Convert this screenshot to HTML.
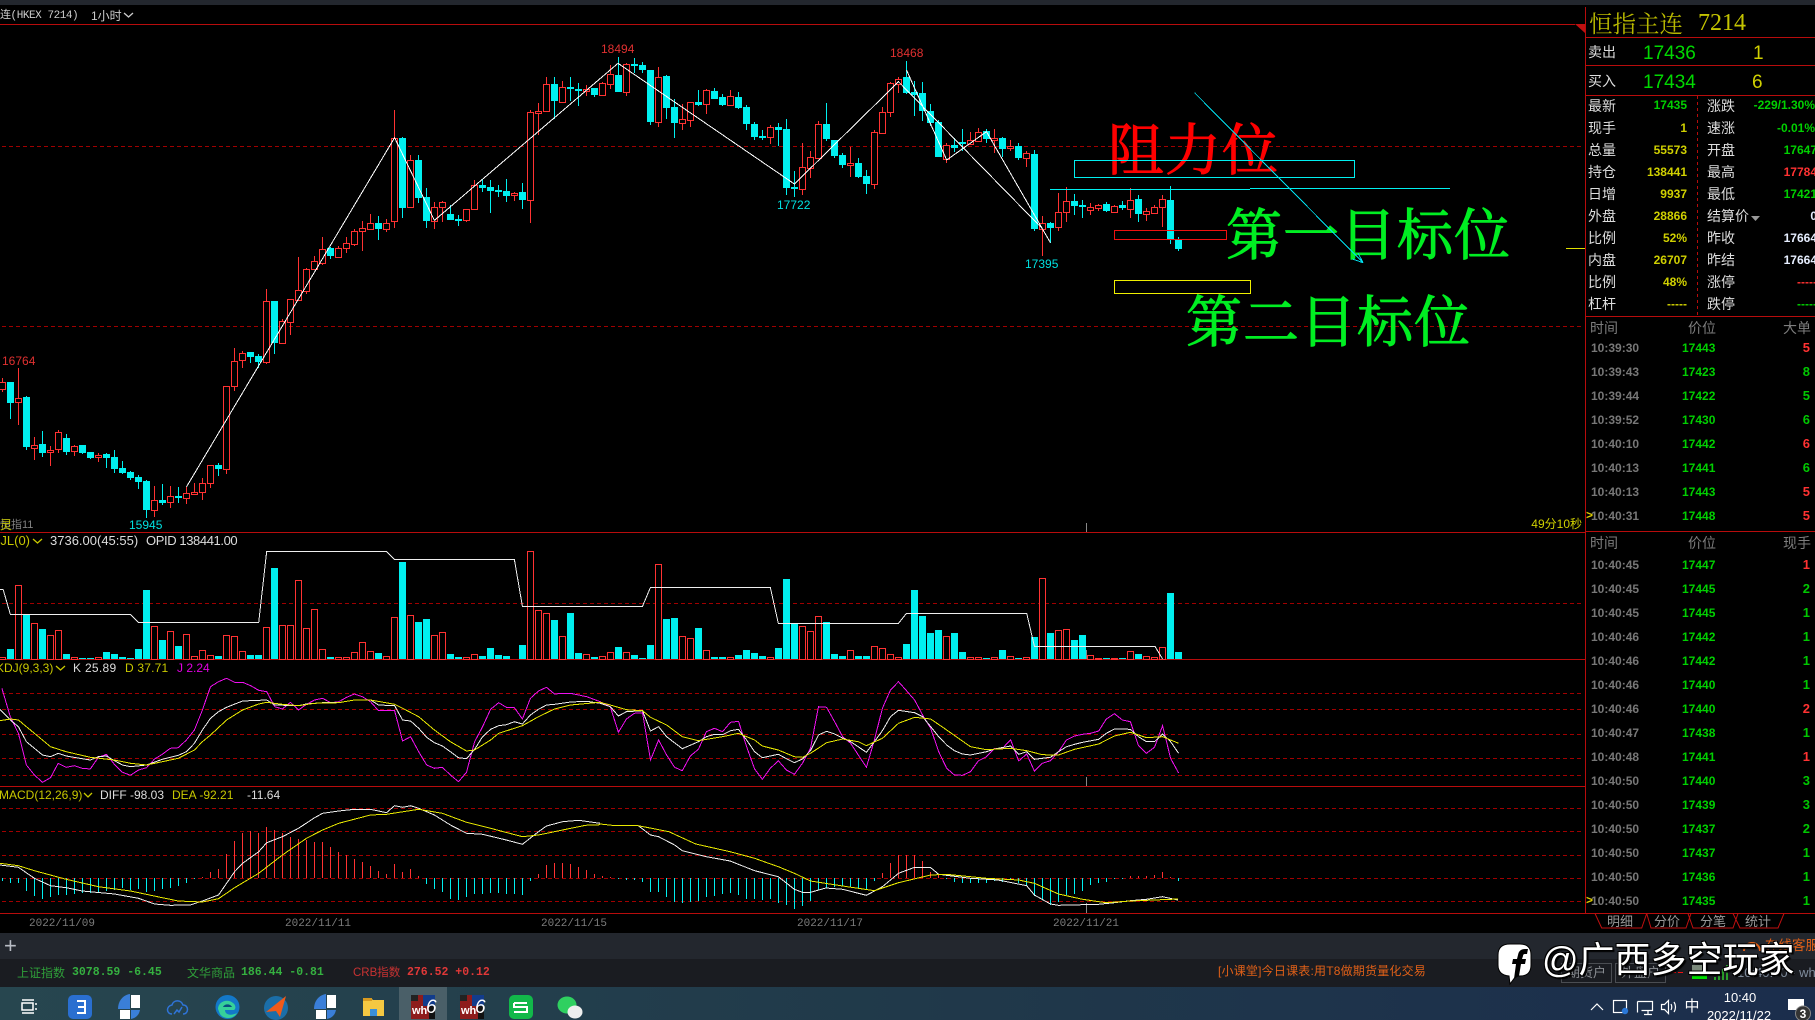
<!DOCTYPE html>
<html lang="zh"><head><meta charset="utf-8"><title>恒指主连</title>
<style>
html,body{margin:0;padding:0;background:#000;width:1815px;height:1020px;overflow:hidden}
body{position:relative;font-family:"Liberation Sans","WenQuanYi Zen Hei","Noto Sans CJK SC",sans-serif}
.t{position:absolute;white-space:nowrap;line-height:16px;height:16px;font-size:12px}
.l{font-size:14px;color:#ddd}
.v{font-weight:700;font-size:12px;right:128px}
.w{font-weight:700;font-size:12px;right:-2px}
.g{color:#00d000}.y{color:#d0d000}.r2{color:#ff3232}.e{color:#e6eeff}
.h{color:#7d7d7d;font-size:14px}
.row{position:absolute;left:0;width:1815px;height:16px;line-height:16px;font-size:12px;font-weight:700}
.row b{position:absolute;left:1591px;color:#777}
.row i{position:absolute;left:1682px;color:#00d000;font-style:normal}
.row u{position:absolute;right:5px;text-decoration:none;font-size:13px}
.R{color:#ff3232}.G{color:#00c800}
.m{font-family:"Liberation Mono","WenQuanYi Zen Hei",monospace;font-size:11.5px}
.d{font-family:"Liberation Mono",monospace;font-size:11px;color:#7c7c7c}
.tab{color:#999;font-size:13px;transform:translateX(-50%)}
svg{position:absolute;left:0;top:0}
</style></head><body>
<div style="position:absolute;left:0;top:0;width:1815px;height:5px;background:#23272e"></div>
<div style="position:absolute;left:0;top:933px;width:1815px;height:26px;background:#23272e"></div>
<div style="position:absolute;left:0;top:959px;width:1815px;height:28px;background:#1a1c21"></div>
<div style="position:absolute;left:0;top:987px;width:1815px;height:33px;background:linear-gradient(90deg,#27464f,#20394a 50%,#1b2d4c)"></div>
<div style="position:absolute;left:399px;top:987px;width:48px;height:33px;background:#4a5f68"></div>

<svg width="1815" height="1020" viewBox="0 0 1815 1020">
<g id="ch" shape-rendering="crispEdges"></g>
<g font-family="'Noto Serif CJK SC',serif" font-weight="400" font-size="56" letter-spacing="1" stroke-width="1">
<text x="1108" y="170" fill="#ff0000" stroke="#ff0000">阻力位</text>
<text x="1226" y="255" fill="#00ee22" stroke="#00ee22">第一目标位</text>
<text x="1186" y="342" fill="#00ee22" stroke="#00ee22">第二目标位</text>
</g>
<g fill="none" shape-rendering="crispEdges">
<rect x="1074.5" y="160.5" width="280" height="17" stroke="#00f0f0"/>
<path d="M1050 189.5H1250M1250 188.5H1450" stroke="#00f0f0"/>
<rect x="1114.5" y="230.5" width="112" height="9" stroke="#f01010"/>
<rect x="1114.5" y="280.5" width="136" height="13" stroke="#f0f000"/>
<path d="M1194.5 92.7L1363 262.7M1363 262.7L1352.5 259M1363 262.7L1358 253" stroke="#00e0f0"/>
<path d="M1566 248.5H1585" stroke="#e0e000"/>
</g>
<path d="M1575 24H1585V33Z" fill="#c01010"/>
<path d="M1751 216h9l-4.5 5z" fill="#999"/>
<g fill="none" stroke="#c01010">
<path d="M1595 913.5L1601.7 928H1641.7L1646.7 913.5M1646.7 913.5L1651 928H1686L1691 913.5M1688 913.5L1693 928H1733L1738 913.5M1733 913.5L1740 928H1778L1784 913.5"/>
</g>
<!-- status widgets -->
<path d="M1744 951a8 8 0 0 1 16 0" fill="none" stroke="#e06018" stroke-width="2"/>
<rect x="1561.5" y="963.5" width="50" height="19" fill="none" stroke="#4a4d52"/>
<rect x="1615.5" y="963.5" width="50" height="19" fill="none" stroke="#4a4d52"/>
<path d="M1671 972.5h5M1678 972.5h5" stroke="#f01010"/>
<rect x="1692" y="965" width="15" height="9" fill="#7c8a7c"/><rect x="1692" y="974" width="15" height="5" fill="#00e000"/>
<path d="M1714 980v-3h2v3zM1718 980v-7h2v7zM1722 980v-11h2v11zM1726 980v-15h2v15z" fill="#2aa02a"/>
<!-- taskbar icons -->
<g fill="none" stroke="#fff" stroke-width="1.5"><path d="M22 1000h12M22 1013h12"/><rect x="22" y="1003" width="11" height="7"/><path d="M36 1003v2M36 1008v2"/></g>
<rect x="68" y="995" width="24" height="24" rx="5" fill="#2a6fd0"/><path d="M77 1001h8v12h-8M78 1007h7" fill="none" stroke="#fff" stroke-width="2"/>
<g id="pie"><path d="M118 1009c0-8 5-14 12-15v15z" fill="#3a7fd8"/><rect x="131" y="995" width="9" height="13" fill="#fff"/><rect x="120" y="1010" width="10" height="9" fill="#fff"/><path d="M131 1010h9c-1 5-4 8-9 9z" fill="#3a7fd8"/></g>
<path d="M172 1014c-6 0-6-8 0-9 1-5 9-6 11 0 6 0 6 9 0 9M174 1014l3-4 2 2 3-5" fill="none" stroke="#2f74d8" stroke-width="1.5"/>
<circle cx="227.5" cy="1007" r="12" fill="#1378c8"/><path d="M218 1009c0-7 9-11 15-6 3 2 3 6 1 7h-9c0 5 6 6 12 3-3 6-13 7-17 1z" fill="#36d09a"/><path d="M223 1007c1-3 7-4 9 0z" fill="#0a4c80"/>
<circle cx="276" cy="1008" r="12" fill="#1b6ea8"/><path d="M266 1012l20-16-6 21-4-6z" fill="#f05a1a"/>
<g transform="translate(196,0)"><path d="M118 1009c0-8 5-14 12-15v15z" fill="#3a7fd8"/><rect x="131" y="995" width="9" height="13" fill="#fff"/><rect x="120" y="1010" width="10" height="9" fill="#fff"/><path d="M131 1010h9c-1 5-4 8-9 9z" fill="#3a7fd8"/></g>
<path d="M363 998h8l2 2h11v16h-21z" fill="#f5c842"/><rect x="363" y="998" width="9" height="3" fill="#d89a20"/><rect x="370" y="1009" width="7" height="7" fill="#3a90d8"/>
<g id="w1"><rect x="411" y="995" width="24" height="24" fill="#8e1c1c"/><rect x="423" y="995" width="12" height="11" fill="#123c8c"/><rect x="429" y="1006" width="6" height="13" fill="#111"/><rect x="411" y="995" width="7" height="6" fill="#222"/></g>
<g transform="translate(49,0)"><rect x="411" y="995" width="24" height="24" fill="#8e1c1c"/><rect x="423" y="995" width="12" height="11" fill="#123c8c"/><rect x="429" y="1006" width="6" height="13" fill="#111"/><rect x="411" y="995" width="7" height="6" fill="#222"/></g>
<rect x="509" y="995" width="24" height="24" rx="5" fill="#12b84a"/><path d="M514 1003h13M514 1003v4h13v5h-13" fill="none" stroke="#fff" stroke-width="2"/>
<ellipse cx="567" cy="1005" rx="9.5" ry="8.5" fill="#2fd060"/><ellipse cx="575" cy="1012" rx="7.5" ry="6.5" fill="#eee"/>
<!-- tray -->
<g fill="none" stroke="#fff" stroke-width="1.2">
<path d="M1591 1010l6-6 6 6"/>
<rect x="1613.5" y="1000.5" width="13" height="12"/>
<path d="M1637.5 1001.5h15v9h-11M1637.5 1001.5v11M1648 1011v3M1644 1014.5h8"/>
<path d="M1661.5 1004.5h3l4-4v13l-4-4h-3zM1671 1004c1 2 1 4 0 6M1674 1002c2 3 2 7 0 10"/>
</g>
<circle cx="1625" cy="1011" r="3.2" fill="#2a78d8"/>
<path d="M1788 999h16v11h-6l-2 3v-3h-8z" fill="#fff"/>
<circle cx="1803" cy="1013.5" r="7.5" fill="#333" stroke="#888"/>
<!-- facebook mark -->
<g transform="translate(-2,0)">
<path d="M1512 944h10q11 0 11 11v10q0 11-11 11h-4l-6 8-1-8q-11-1-11-11v-10q0-11 12-11z" fill="#fff" stroke="#000"/>
<path d="M1516 979l2-15h-4l1-5h4l1-4q1-6 7-6h3l-1 5h-2q-2 0-2 2l-1 3h4l-1 5h-4l-2 12z" fill="#000"/>
</g>
</svg>

<!-- chart header -->
<span class="t" style="left:0;top:8px;color:#ccc;font-family:'Liberation Mono','WenQuanYi Zen Hei',monospace;font-size:11px;letter-spacing:-.45px">连(HKEX 7214)</span>
<span class="t" style="left:91px;top:8px;color:#ccc;font-size:12px">1小时</span>
<svg width="140" height="24" style="left:0;top:0"><path d="M124 13l4.5 4 4.5-4" fill="none" stroke="#ccc" stroke-width="1.3"/></svg>

<!-- chart labels -->
<span class="t" style="left:2px;top:353px;color:#e03030">16764</span>
<span class="t" style="left:129px;top:517px;color:#00e0e0">15945</span>
<span class="t" style="left:601px;top:41px;color:#e03030">18494</span>
<span class="t" style="left:890px;top:45px;color:#e03030">18468</span>
<span class="t" style="left:777px;top:197px;color:#00e0e0">17722</span>
<span class="t" style="left:1025px;top:256px;color:#00e0e0">17395</span>
<span class="t" style="left:0;top:517px;color:#808080;font-size:11px">恒指11</span>
<span class="t" style="left:0;top:517px;color:#c8c800;font-size:12px">灵</span>
<span class="t" style="right:233px;top:516px;color:#d0d000;font-size:12px">49分10秒</span>

<span class="t" style="left:-9px;top:533px;color:#c8c800;font-size:13px">CJL(0)</span>
<span class="t" style="left:50px;top:533px;color:#ddd;font-size:13px">3736.00(45:55)</span>
<span class="t" style="left:146px;top:533px;color:#ddd;font-size:13px;letter-spacing:-.4px">OPID 138441.00</span>
<span class="t" style="left:-4px;top:660px;color:#c8c800">KDJ(9,3,3)</span>
<span class="t" style="left:73px;top:660px;color:#ddd;letter-spacing:.3px">K 25.89</span>
<span class="t" style="left:125px;top:660px;color:#c8c800;letter-spacing:.2px">D 37.71</span>
<span class="t" style="left:177px;top:660px;color:#e000e0">J 2.24</span>
<span class="t" style="left:-1px;top:787px;color:#c8c800">MACD(12,26,9)</span>
<span class="t" style="left:100px;top:787px;color:#ddd">DIFF -98.03</span>
<span class="t" style="left:172px;top:787px;color:#c8c800">DEA -92.21</span>
<span class="t" style="left:247px;top:787px;color:#ddd">-11.64</span>
<svg width="100" height="810" style="left:0;top:0" fill="none" stroke="#c8c800" stroke-width="1.3"><path d="M33 539l4.5 4 4.5-4M56 666l4.5 4 4.5-4M84 793l4 4 4-4"/></svg>

<span class="t d" style="left:29px;top:916px">2022/11/09</span>
<span class="t d" style="left:285px;top:916px">2022/11/11</span>
<span class="t d" style="left:541px;top:916px">2022/11/15</span>
<span class="t d" style="left:797px;top:916px">2022/11/17</span>
<span class="t d" style="left:1053px;top:916px">2022/11/21</span>

<!-- right panel header -->
<span class="t" style="left:1589px;top:8px;height:28px;line-height:28px;font-size:23.5px;color:#b8b800;font-family:'Noto Serif CJK SC',serif">恒指主连</span>
<span class="t" style="left:1698px;top:9px;height:28px;line-height:28px;font-size:24px;color:#c4c400;font-family:'Liberation Serif',serif">7214</span>
<span class="t l" style="left:1588px;top:44px">卖出</span>
<span class="t g" style="left:1643px;top:45px;font-size:19px;line-height:18px;color:#00d800">17436</span>
<span class="t y" style="left:1753px;top:45px;font-size:19px;line-height:18px">1</span>
<span class="t l" style="left:1588px;top:73px">买入</span>
<span class="t g" style="left:1643px;top:74px;font-size:19px;line-height:18px;color:#00d800">17434</span>
<span class="t y" style="left:1752px;top:74px;font-size:19px;line-height:18px">6</span>

<span class="t l" style="left:1588px;top:98px">最新</span><span class="t v g" style="top:97px">17435</span>
<span class="t l" style="left:1707px;top:98px">涨跌</span><span class="t w g" style="top:97px;right:0">-229/1.30%</span>
<span class="t l" style="left:1588px;top:120px">现手</span><span class="t v y" style="top:120px">1</span>
<span class="t l" style="left:1707px;top:120px">速涨</span><span class="t w g" style="top:120px;right:0">-0.01%</span>
<span class="t l" style="left:1588px;top:142px">总量</span><span class="t v y" style="top:142px">55573</span>
<span class="t l" style="left:1707px;top:142px">开盘</span><span class="t w g" style="top:142px">17647</span>
<span class="t l" style="left:1588px;top:164px">持仓</span><span class="t v y" style="top:164px">138441</span>
<span class="t l" style="left:1707px;top:164px">最高</span><span class="t w r2" style="top:164px">17784</span>
<span class="t l" style="left:1588px;top:186px">日增</span><span class="t v y" style="top:186px">9937</span>
<span class="t l" style="left:1707px;top:186px">最低</span><span class="t w g" style="top:186px">17421</span>
<span class="t l" style="left:1588px;top:208px">外盘</span><span class="t v y" style="top:208px">28866</span>
<span class="t l" style="left:1707px;top:208px">结算价</span><span class="t w e" style="top:208px">0</span>
<span class="t l" style="left:1588px;top:230px">比例</span><span class="t v y" style="top:230px">52%</span>
<span class="t l" style="left:1707px;top:230px">昨收</span><span class="t w e" style="top:230px">17664</span>
<span class="t l" style="left:1588px;top:252px">内盘</span><span class="t v y" style="top:252px">26707</span>
<span class="t l" style="left:1707px;top:252px">昨结</span><span class="t w e" style="top:252px">17664</span>
<span class="t l" style="left:1588px;top:274px">比例</span><span class="t v y" style="top:274px">48%</span>
<span class="t l" style="left:1707px;top:274px">涨停</span><span class="t w r2" style="top:274px">-----</span>
<span class="t l" style="left:1588px;top:296px">杠杆</span><span class="t v y" style="top:296px">-----</span>
<span class="t l" style="left:1707px;top:296px">跌停</span><span class="t w g" style="top:296px">-----</span>

<span class="t h" style="left:1590px;top:320px">时间</span><span class="t h" style="left:1688px;top:320px">价位</span><span class="t h" style="left:1783px;top:320px">大单</span>
<div class="row" style="top:340px"><b>10:39:30</b><i>17443</i><u class="R">5</u></div>
<div class="row" style="top:364px"><b>10:39:43</b><i>17423</i><u class="G">8</u></div>
<div class="row" style="top:388px"><b>10:39:44</b><i>17422</i><u class="G">5</u></div>
<div class="row" style="top:412px"><b>10:39:52</b><i>17430</i><u class="G">6</u></div>
<div class="row" style="top:436px"><b>10:40:10</b><i>17442</i><u class="R">6</u></div>
<div class="row" style="top:460px"><b>10:40:13</b><i>17441</i><u class="G">6</u></div>
<div class="row" style="top:484px"><b>10:40:13</b><i>17443</i><u class="R">5</u></div>
<div class="row" style="top:508px"><b>10:40:31</b><i>17448</i><u class="R">5</u></div>
<span class="t" style="left:1586px;top:507px;color:#e0d000;font-weight:700">&gt;</span>

<span class="t h" style="left:1590px;top:535px">时间</span><span class="t h" style="left:1688px;top:535px">价位</span><span class="t h" style="left:1783px;top:535px">现手</span>
<div class="row" style="top:557px"><b>10:40:45</b><i>17447</i><u class="R">1</u></div>
<div class="row" style="top:581px"><b>10:40:45</b><i>17445</i><u class="G">2</u></div>
<div class="row" style="top:605px"><b>10:40:45</b><i>17445</i><u class="G">1</u></div>
<div class="row" style="top:629px"><b>10:40:46</b><i>17442</i><u class="G">1</u></div>
<div class="row" style="top:653px"><b>10:40:46</b><i>17442</i><u class="G">1</u></div>
<div class="row" style="top:677px"><b>10:40:46</b><i>17440</i><u class="G">1</u></div>
<div class="row" style="top:701px"><b>10:40:46</b><i>17440</i><u class="R">2</u></div>
<div class="row" style="top:725px"><b>10:40:47</b><i>17438</i><u class="G">1</u></div>
<div class="row" style="top:749px"><b>10:40:48</b><i>17441</i><u class="R">1</u></div>
<div class="row" style="top:773px"><b>10:40:50</b><i>17440</i><u class="G">3</u></div>
<div class="row" style="top:797px"><b>10:40:50</b><i>17439</i><u class="G">3</u></div>
<div class="row" style="top:821px"><b>10:40:50</b><i>17437</i><u class="G">2</u></div>
<div class="row" style="top:845px"><b>10:40:50</b><i>17437</i><u class="G">1</u></div>
<div class="row" style="top:869px"><b>10:40:50</b><i>17436</i><u class="G">1</u></div>
<div class="row" style="top:893px"><b>10:40:50</b><i>17435</i><u class="G">1</u></div>
<span class="t" style="left:1586px;top:892px;color:#e0d000;font-weight:700">&gt;</span>

<span class="t tab" style="left:1620px;top:914px">明细</span>
<span class="t tab" style="left:1667px;top:914px">分价</span>
<span class="t tab" style="left:1713px;top:914px">分笔</span>
<span class="t tab" style="left:1758px;top:914px">统计</span>

<!-- status bar -->
<span class="t" style="left:4px;top:938px;color:#b8bcc4;font-size:22px;line-height:16px">+</span>
<span class="t" style="left:17px;top:965px;color:#2f9f3a">上证指数</span>
<span class="t m" style="left:72px;top:965px;color:#35b040;font-weight:700">3078.59 -6.45</span>
<span class="t" style="left:187px;top:965px;color:#2f9f3a">文华商品</span>
<span class="t m" style="left:241px;top:965px;color:#35b040;font-weight:700">186.44 -0.81</span>
<span class="t" style="left:353px;top:965px;color:#c83232;font-size:11.5px">CRB指数</span>
<span class="t m" style="left:407px;top:965px;color:#e03838;font-weight:700">276.52 +0.12</span>
<span class="t" style="left:1218px;top:963px;color:#e06018;font-size:12px;letter-spacing:.2px">[小课堂]今日课表:用T8做期货量化交易</span>
<span class="t" style="left:1765px;top:938px;color:#e06018;font-size:13.5px">在线客服</span>
<span class="t" style="left:1567px;top:965px;color:#8a8d92;font-size:13px">期货户</span>
<span class="t" style="left:1621px;top:965px;color:#8a8d92;font-size:13px">外盘户</span>
<span class="t" style="left:1737px;top:965px;color:#7f8c9c;font-size:13px">10:40:50 - wh</span>

<!-- watermark -->
<span class="t" style="left:1542px;top:940px;height:40px;line-height:40px;font-size:36px;color:#fff;font-family:'Liberation Sans','Noto Sans CJK SC',sans-serif;text-shadow:-1px -1px 0 #000,1px -1px 0 #000,-1px 1px 0 #000,1px 1px 0 #000,2px 2px 1px #000">@广西多空玩家</span>

<!-- taskbar text -->
<span class="t" style="left:1692px;top:999px;color:#fff;font-size:15px;transform:translateX(-50%)">中</span>
<span class="t" style="left:1740px;top:990px;color:#fff;font-size:13px;transform:translateX(-50%)">10:40</span>
<span class="t" style="left:1739px;top:1008px;color:#fff;font-size:13px;transform:translateX(-50%)">2022/11/22</span>
<span class="t" style="left:1803px;top:1006px;color:#fff;font-size:12px;font-weight:700;transform:translateX(-50%)">3</span>
<span class="t" style="left:412px;top:1003px;color:#fff;font-size:11px;font-weight:700">wh</span>
<span class="t" style="left:461px;top:1003px;color:#fff;font-size:11px;font-weight:700">wh</span>
<span class="t" style="left:426px;top:998px;color:#fff;font-size:19px;font-style:italic;line-height:20px">6</span>
<span class="t" style="left:475px;top:998px;color:#fff;font-size:19px;font-style:italic;line-height:20px">6</span>

<script>
(function(){
var s=[],RED='#ff3232',CY='#00f0f0',LN='#b80c0c',DS='#a00000';
function rect(x,y,w,h,f){s.push('<rect x="'+x+'" y="'+y+'" width="'+w+'" height="'+h+'" fill="'+f+'"/>');}
function dash(y){s.push('<path d="M2 '+(y+.5)+'H1583" stroke="'+DS+'" stroke-dasharray="4 3" fill="none"/>');}
[146,326,603,693,709,734,758,775,808,831,855,878,901].forEach(dash);
[24,532,659,786,913].forEach(function(y){rect(0,y,y==913?1815:(y==24?1575:1585),1,LN);});
[531,37,65,95,316].forEach(function(y){rect(1585,y,230,1,LN);});
rect(1585,7,1,906,LN);
s.push('<path d="M1697.5 96V316" stroke="'+LN+'" stroke-dasharray="3 3"/>');
[[523,9],[650,9],[777,9],[903,10]].forEach(function(a){rect(1086,a[0],1,a[1],'#888');});

function cand(str,fy,k0){str.split(';').forEach(function(e,i){
 var a=e.split(','),x=2+8*(k0+i),h=Math.round(fy(+a[1])),t=Math.round(fy(+a[2])),b=Math.round(fy(+a[3])),l=Math.round(fy(+a[4]));
 var c=a[0]=='r'?RED:CY;
 rect(x,h,1,Math.max(l-h,1),c);
 if(a[0]=='r'){s.push('<rect x="'+(x-2.5)+'" y="'+(t+.5)+'" width="6" height="'+Math.max(b-t,2)+'" fill="#000" stroke="'+RED+'"/>');}
 else rect(x-3,t,7,Math.max(b-t,2),CY);
});}
var y5=function(z){return z/2.904},y6=function(z){return 20+z/3};
cand("r,1098,1108,1130,1138;c,1108,1108,1170,1218;r,1070,1155,1166,1233;c,1150,1153,1298,1307;r,1270,1293,1300,1336;c,1251,1289,1316,1327;r,1296,1306,1313,1353;r,1250,1255,1303,1315;c,1260,1272,1312,1322;r,1292,1296,1311,1324;c,1292,1292,1315,1317;c,1312,1312,1330,1333;r,1315,1322,1328,1342;c,1316,1318,1330,1359;c,1307,1327,1362,1373;c,1339,1359,1373,1377;c,1369,1371,1388,1393;c,1380,1385,1399,1420;c,1395,1397,1481,1503;r,1411,1453,1480,1501;c,1405,1452,1462,1466;r,1411,1441,1457,1475;c,1414,1440,1446,1461;r,1413,1433,1445,1463;r,1402,1430,1433,1433;r,1388,1403,1428,1452;r,1351,1351,1404,1417;c,1345,1350,1362,1382;r,1120,1122,1361,1376;r,1010,1049,1120,1135;r,1020,1026,1046,1069;c,1022,1022,1037,1054;c,1028,1035,1050,1068;r,840,875,1050,1058;c,874,874,996,1028;r,925,933,995,998;r,868,869,934,973;r,746,843,870,870;r,778,782,844,853;r,743,759,780,783;r,688,724,763,770;c,718,720,742,752;r,715,721,745,745;r,687,707,721,735;r,665,672,708,714;r,642,663,672,729;r,621,649,664,664;c,627,648,664,697;r,636,647,664,673;r,318,400,643,662;c,399,401,604,633;r,450,466,600,600;c,450,465,574,590;c,546,573,641,662;r,588,602,641,665;r,584,588,602,645;c,594,621,638,640;c,625,636,641,656;r,608,608,640,645;r,523,538,608,608;c,520,537,546,558;c,524,544,555,620;c,537,552,558,572;c,520,555,569,587;r,557,560,566,584;c,531,558,581,607;r,320,326,582,648;r,298,323,326,392;r,225,245,321,326;c,225,244,292,345;r,236,254,295,298;c,224,254,258,294;c,240,258,262,308;r,248,258,262,278;c,256,256,275,282",y5,0);
cand("r,185,190,225,228;r,136,163,191,208;c,111,165,216,216;r,128,133,215,228;c,114,132,137,160;c,127,135,150,160;c,150,150,306,315;r,141,172,305,320;c,165,168,264,297;c,238,261,309,354;r,251,298,308,330;r,245,247,299,320;c,210,246,254,258;r,208,211,251,282;c,205,213,237,237;c,222,231,255,258;r,210,229,255,258;c,216,231,264,266;c,255,261,312,330;c,306,312,351,360;c,330,348,354,360;r,316,322,352,372;c,310,321,329,378;c,297,327,504,525;c,453,501,507,531;r,369,441,506,525;r,393,412,444,474;r,303,313,414,414;c,250,312,357,363;c,360,360,408,414;c,399,405,435,444;r,381,430,436,471;c,414,429,471,474;c,450,468,492,522;r,330,337,491,507;r,261,277,338,338;r,186,190,275,291;r,170,178,191,219;c,123,171,219,222;c,183,216,225,288;c,186,219,273,303;c,252,273,309,318;c,300,306,411,411;r,369,376,417,429;c,355,375,384,396;c,327,366,372,393;r,337,361,372,375;r,325,337,363,363;c,327,333,357,369;r,327,355,358,400;c,351,354,387,411;r,361,379,385,393;c,369,378,414,420;r,393,400,413,441;c,390,402,627,633;r,588,610,627,708;c,606,609,624,669;r,519,577,622,633;r,502,544,577,606;c,522,544,557,585;c,540,555,561,594;r,550,562,569,585;r,552,554,563,573;c,547,552,573,576;r,555,557,575,575;c,543,555,564,570;r,505,541,566,594;c,525,537,582,606;r,564,574,583,602;r,555,562,578,582;r,525,538,562,621;c,498,540,657,672;c,651,660,687,693",y6,75);

function vol(str,k0){str.split(' ').forEach(function(e,i){
 var c=e[0],t=Math.round(520+e.slice(1)/3),x=2+8*(k0+i);
 if(c=='r')s.push('<rect x="'+(x-2.5)+'" y="'+(t+.5)+'" width="6" height="'+(659-t)+'" fill="#000" stroke="'+RED+'"/>');
 else rect(x-3,t,7,659-t,CY);
});}
vol("r412 c387 r196 c285 r310 c327 r346 r331 c402 r412 c414 c414 r412 c396 c402 c411 c414 c387 c210 r319 c360 r334 c378 r343 r409 r391 r406 c408 r346 r349 r394 c405 c405 r322 c144 r316 r316 r181 r325 r268 r388 c411 r412 r412 r397 r367 r394 c399 r409 r292 c126 r286 c306 c297 r346 r337 c402 c411 r412 r403 c408 c384 c405 c408 c416 c375 r94 r271 r280 c300 r349 c279 c399 r403 c411",0);
vol("r409 r397 c381 r397 c405 c414 c375 r133 c297 c294 r349 r355 c324 r391 c411 c411 r412 c405 c390 c399 c408 r412 c384 c177 c309 r319 r334 r289 c306 c402 c408 r391 c408 c408 r379 r385 r403 r412 c372 c210 c288 c339 c330 r349 c339 c396 r412 r412 c414 r412 c390 r409 c414 r412 c351 r175 c339 r331 r328 c360 c345 r406 r415 c414 r415 c414 r394 c402 r409 r412 r382 c219 c396",75);

function macd(str,k0){str.split(' ').forEach(function(e,i){
 var c=e[0]=='r'?RED:CY,y=Math.round(520+e.slice(1)/3),x=2+8*(k0+i);
 if(y<878)rect(x,y,1,878-y,c);else rect(x,878,1,Math.max(y-878,1),c);
});}
macd("c1082 c1088 c1088 c1112 c1128 c1137 c1130 c1125 c1125 c1122 c1120 c1118 c1115 c1112 c1110 c1105 c1110 c1107 c1115 c1112 c1108 c1105 c1098 c1090 c1078 r1072 r1055 r1048 r1002 r963 r938 r934 r938 r921 r930 r940 r951 r957 r960 r966 r966 r981 r996 r1006 r1017 r1027 r1039 r1052 r1063 r1033 r1055 r1048 r1068 c1092 c1108 c1115 c1137 c1140 c1130 c1122 c1122 c1118 c1118 c1122 c1122 c1125 c1083 r1062 r1034 r1030 r1030 r1033 r1040 r1050 r1063",0);
macd("r1068 r1072 c1078 c1080 c1080 c1085 c1115 c1115 c1130 c1145 c1150 c1145 c1142 c1130 c1127 c1122 c1120 c1125 c1137 c1137 c1140 c1137 c1150 c1155 c1166 c1157 c1142 c1110 c1105 c1100 c1097 c1100 c1105 c1108 c1083 r1058 r1030 r1006 r1006 r1006 r1023 r1055 r1065 c1078 c1087 c1090 c1090 c1088 c1088 c1082 c1085 c1080 c1090 c1095 c1128 c1140 c1155 c1145 c1125 c1122 c1112 c1095 c1088 c1085 c1078 c1078 r1069 r1068 r1067 r1066 r1056 r1071 c1083",75);

function line(str,ox,col){
 var p=str.split(' ').map(function(q){var a=q.split(',');return (ox+a[0]/2.613).toFixed(1)+','+(520+a[1]/3).toFixed(1);}).join(' ');
 s.push('<polyline points="'+p+'" fill="none" stroke="'+col+'"/>');
}
function real(p,col){s.push('<polyline points="'+p+'" fill="none" stroke="'+col+'"/>');}
// main zigzag
real("186.4,487 394.6,137.7 434.4,220.4 618,63.3 794.4,184 898.5,81.7 1042,228.3","#fff");
real("906.5,70 946.7,160 986.5,131.7 1050.4,242.7","#fff");
// volume line
line("0,208 8,208 27,283 341,283 362,307 676,307 697,94 1010,94 1031,119 1344,119 1365,259 1568,259",0,"#eee");
line("0,259 111,259 132,202 445,202 466,310 780,310 801,280 1115,280 1135,379 1450,379 1470,417",600,"#eee");
// J
line("5,505 27,590 48,640 69,735 90,765 111,787 132,773 152,730 173,742 194,737 215,745 236,747 257,712 278,703 299,733 320,757 341,766 362,750 383,743 404,717 424,703 445,685 466,683 487,660 508,630 529,570 550,500 571,485 592,475 613,487 634,487 655,497 676,511 697,515 718,560 738,567 759,547 780,570 801,553 822,540 843,535 864,548 885,545 906,532 926,522 947,530 968,545 989,572 1010,572 1031,572 1052,663 1073,650 1094,695 1115,735 1135,745 1156,742 1177,765 1198,785 1219,757 1240,665 1261,620 1282,568 1303,548 1323,562 1344,563 1365,597 1386,535 1407,513 1428,502 1449,522 1470,520 1491,520 1512,525 1533,530 1568,545",0,"#f010f0");
line("0,545 27,560 48,637 69,597 90,580 111,578 132,720 153,660 174,705 195,742 215,752 236,708 257,688 278,635 299,625 320,635 341,607 362,604 383,680 404,747 424,778 445,745 466,722 487,750 508,763 529,730 550,685 571,560 592,562 613,605 634,650 655,670 675,705 696,742 717,660 738,565 759,510 780,485 801,512 822,540 843,585 864,625 885,695 906,745 926,765 947,766 968,755 989,722 1010,710 1031,685 1052,685 1073,659 1094,723 1115,702 1135,753 1156,730 1177,722 1198,695 1219,660 1240,648 1261,643 1282,640 1303,633 1323,597 1344,581 1365,600 1386,605 1407,677 1428,700 1449,682 1470,617 1491,715 1512,759",600,"#f010f0");
// K
line("0,568 27,600 48,620 69,665 90,685 111,705 132,710 152,700 173,708 215,716 236,720 257,710 278,708 299,722 320,735 341,740 383,735 424,718 466,706 487,695 508,670 529,630 550,595 571,575 592,562 634,543 697,540 718,555 780,557 801,552 843,548 885,548 926,540 968,540 989,555 1031,557 1052,600 1073,603 1094,625 1115,652 1135,668 1156,678 1177,695 1198,713 1219,716 1240,688 1261,650 1282,628 1303,617 1323,614 1344,605 1365,612 1386,585 1407,568 1428,555 1449,553 1491,546 1533,544 1568,550",0,"#eee");
line("0,550 27,560 48,588 69,575 111,572 132,633 153,620 174,650 215,686 257,665 278,650 299,643 320,644 341,632 362,628 383,660 404,695 424,713 466,703 487,716 508,728 529,717 550,692 571,645 592,634 613,642 634,654 655,665 696,697 717,665 738,632 759,590 780,571 822,578 843,590 864,620 885,650 906,675 926,692 947,702 968,705 1010,695 1031,687 1073,678 1094,703 1115,695 1135,718 1177,712 1198,695 1219,680 1240,673 1261,667 1303,658 1323,640 1344,627 1386,628 1407,650 1428,665 1449,665 1470,642 1491,665 1512,700",600,"#eee");
// D
line("0,602 27,597 48,600 69,620 90,640 132,680 173,695 236,712 299,720 341,730 383,735 424,725 466,715 508,690 529,665 550,645 592,600 634,570 676,552 697,547 738,553 780,557 822,550 885,548 926,540 968,540 1031,553 1052,565 1094,590 1135,630 1177,665 1219,693 1240,690 1282,660 1303,640 1365,617 1407,590 1449,567 1491,555 1568,547",0,"#e8e800");
line("0,547 27,555 69,569 111,572 132,592 174,615 215,650 257,662 320,650 362,640 404,660 424,678 466,690 508,710 529,712 550,700 592,668 634,657 675,665 696,677 738,655 780,610 822,592 864,597 906,630 968,680 1010,689 1073,685 1115,692 1156,704 1198,705 1240,688 1303,672 1344,648 1386,637 1428,653 1470,650 1512,670",600,"#e8e800");
// MACD
line("0,1035 48,1042 90,1075 132,1097 173,1103 215,1113 299,1122 362,1135 404,1152 445,1156 497,1155 529,1143 571,1125 592,1090 613,1055 634,1030 676,995 697,968 738,950 780,925 822,893 843,880 885,873 926,868 968,868 1010,878 1031,857 1052,862 1073,857 1094,865 1135,885 1177,915 1219,940 1261,943 1323,960 1365,973 1407,935 1428,918 1470,905 1512,901 1568,910",0,"#eee");
line("0,912 40,917 100,917 132,945 153,950 195,975 215,992 278,1010 340,1023 404,1052 466,1070 508,1108 529,1117 550,1117 590,1104 634,1108 696,1126 738,1100 780,1060 822,1042 864,1043 885,1063 968,1075 1040,1080 1115,1097 1135,1125 1177,1152 1198,1156 1303,1153 1344,1148 1386,1142 1428,1138 1470,1130 1510,1140",600,"#eee");
line("0,1030 48,1037 90,1052 173,1078 257,1100 341,1113 424,1133 466,1143 529,1146 571,1136 613,1103 676,1060 738,1005 801,955 843,930 885,910 968,885 1010,883 1094,868 1156,880 1219,907 1282,925 1365,950 1407,945 1470,930 1530,916 1568,914",0,"#e8e800");
line("0,912 40,917 100,917 180,935 250,972 340,995 404,1015 466,1040 508,1060 550,1083 634,1098 717,1112 780,1088 864,1065 906,1063 1010,1075 1094,1080 1135,1090 1198,1122 1261,1138 1323,1148 1386,1143 1510,1137",600,"#e8e800");
document.getElementById('ch').innerHTML=s.join('');
})();
</script>
</body></html>
